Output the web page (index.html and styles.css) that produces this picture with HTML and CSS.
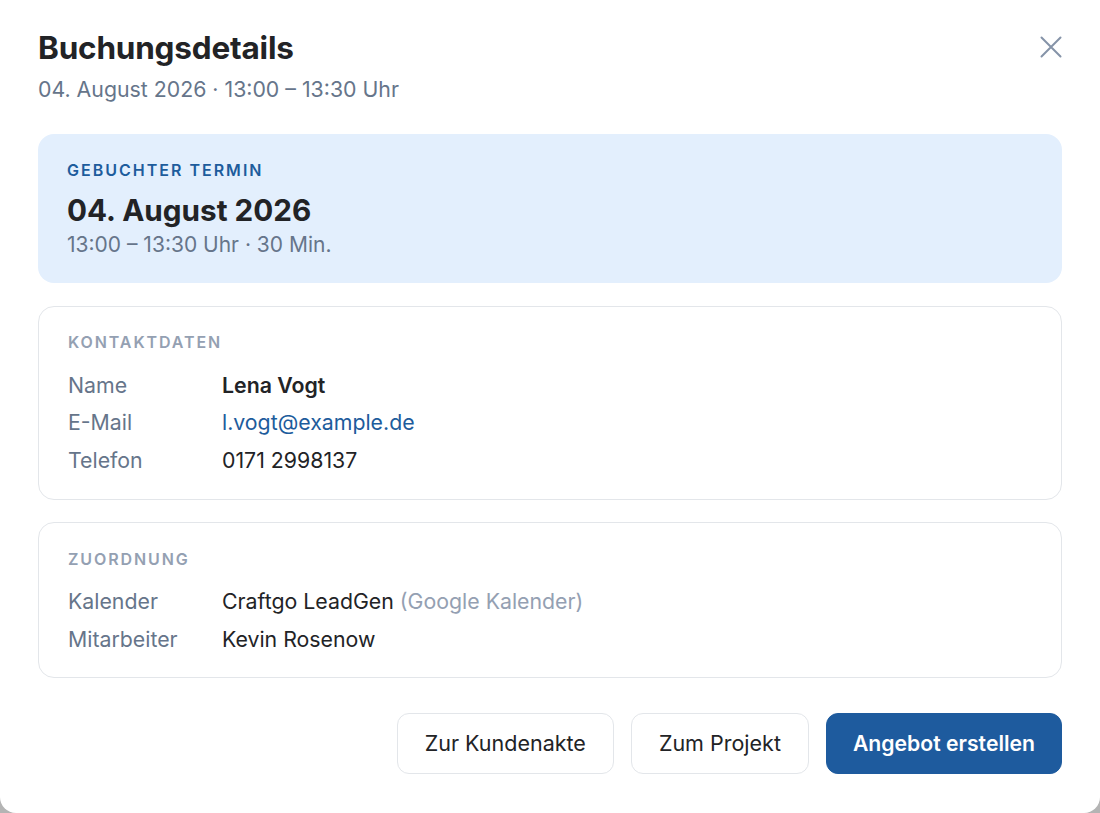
FILE: index.html
```html
<!DOCTYPE html>
<html lang="de">
<head>
<meta charset="utf-8">
<title>Buchungsdetails</title>
<link rel="stylesheet" href="styles.css">
</head>
<body>
<div class="modal">
  <header class="header">
    <div class="header-text">
      <h1 class="title">Buchungsdetails</h1>
      <p class="subtitle">04. August 2026 · 13:00 – 13:30 Uhr</p>
    </div>
    <button class="close" aria-label="Schließen">
      <svg width="22" height="22" viewBox="0 0 22 22" fill="none" stroke="currentColor" stroke-width="2" stroke-linecap="round"><path d="M1.5 1.5 L20.5 20.5 M20.5 1.5 L1.5 20.5"/></svg>
    </button>
  </header>

  <section class="termin">
    <div class="termin-label">Gebuchter Termin</div>
    <div class="termin-date">04. August 2026</div>
    <div class="termin-time">13:00 – 13:30 Uhr · 30 Min.</div>
  </section>

  <section class="card">
    <div class="card-label">Kontaktdaten</div>
    <div class="rows">
      <div class="key">Name</div><div class="val strong">Lena Vogt</div>
      <div class="key">E-Mail</div><div class="val link">l.vogt@example.de</div>
      <div class="key">Telefon</div><div class="val">0171 2998137</div>
    </div>
  </section>

  <section class="card card-last">
    <div class="card-label">Zuordnung</div>
    <div class="rows">
      <div class="key">Kalender</div><div class="val">Craftgo LeadGen <span class="muted">(Google Kalender)</span></div>
      <div class="key">Mitarbeiter</div><div class="val">Kevin Rosenow</div>
    </div>
  </section>

  <footer class="actions">
    <button class="btn">Zur Kundenakte</button>
    <button class="btn">Zum Projekt</button>
    <button class="btn primary">Angebot erstellen</button>
  </footer>
</div>
</body>
</html>
```

FILE: styles.css
```css
* { box-sizing: border-box; }
html, body { margin: 0; padding: 0; }
body {
  background: #b4b4b4;
  font-family: Inter, "Noto Sans", sans-serif;
  color: #1f2328;
  height: 813px;
  overflow: hidden;
}
.modal {
  background: #ffffff;
  width: 1100px;
  height: 813px;
  border-radius: 0 0 16px 16px;
  padding: 28px 38px 0 38px;
  display: flex;
  flex-direction: column;
}
.header {
  display: flex;
  justify-content: space-between;
  align-items: flex-start;
}
.title {
  margin: 0;
  font-size: 31.5px;
  font-weight: 700;
  line-height: 40px;
  color: #222326;
  letter-spacing: -0.2px;
}
.subtitle {
  margin: 7px 0 0 0;
  font-size: 21.3px;
  line-height: 28px;
  color: #66758a;
}
.close {
  border: 0;
  background: none;
  padding: 0;
  margin: 8px 0 0 0;
  width: 22px;
  height: 22px;
  color: #8593a8;
  cursor: pointer;
}
.close svg { display: block; }
.termin {
  margin-top: 31px;
  background: #e3effd;
  border-radius: 16px;
  padding: 27px 29px 25px;
}
.termin-label {
  font-size: 16px;
  font-weight: 600;
  letter-spacing: 2px;
  text-transform: uppercase;
  color: #1d5c9c;
  line-height: 18px;
}
.termin-date {
  margin-top: 13px;
  font-size: 29.7px;
  font-weight: 700;
  line-height: 36px;
  color: #222326;
}
.termin-time {
  margin-top: 4px;
  font-size: 21px;
  line-height: 26px;
  color: #66758a;
}
.card {
  margin-top: 23px;
  border: 1.5px solid #e3e6ea;
  border-radius: 16px;
  padding: 26px 29px 25px;
}
.card-last {
  margin-top: 22px;
  padding-top: 27px;
  padding-bottom: 24px;
}
.card-label {
  font-size: 16px;
  font-weight: 600;
  letter-spacing: 1.9px;
  text-transform: uppercase;
  color: #94a0b2;
  line-height: 18px;
}
.rows {
  margin-top: 19.5px;
  display: grid;
  grid-template-columns: 154px 1fr;
  row-gap: 9.5px;
  font-size: 21.3px;
  line-height: 28px;
}
.key { color: #66758a; }
.val { color: #222326; }
.val.strong { font-weight: 600; }
.val.link { color: #1d5c9c; }
.muted { color: #94a0b2; }
.actions {
  margin-top: 35px;
  display: flex;
  justify-content: flex-end;
  gap: 17px;
}
.btn {
  font-family: inherit;
  font-size: 21.5px;
  height: 61px;
  padding: 0 27px;
  border: 1.5px solid #e3e6ea;
  border-radius: 12px;
  background: #ffffff;
  color: #222326;
  cursor: pointer;
}
.btn.primary {
  background: #1e5b9e;
  border-color: #1e5b9e;
  color: #ffffff;
  font-weight: 600;
  font-size: 21.2px;
  padding: 0 26px;
}
```
